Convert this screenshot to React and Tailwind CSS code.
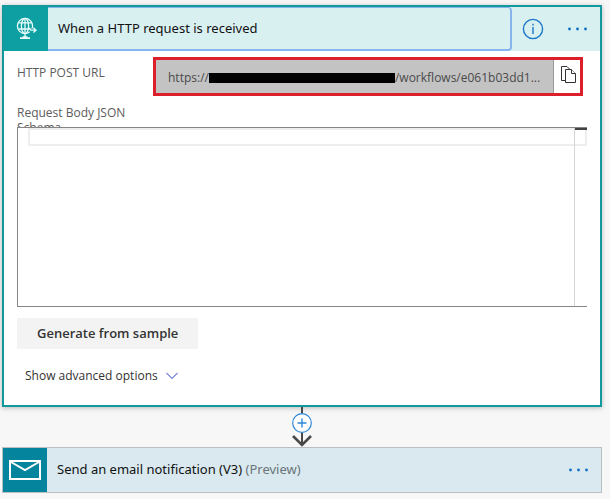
import React from 'react';

const GlobeIcon = () => (
  <svg className="w-6 h-6" viewBox="0 0 24 24" fill="none" stroke="#e8fbfa" strokeWidth="1.3">
    <circle cx="11" cy="9" r="7.6" />
    <ellipse cx="11" cy="9" rx="3.6" ry="7.6" />
    <path d="M4.2 5.8h13.6M4.2 12h13.6M11 1.4v20" />
    <path d="M15.5 13.2h5" stroke="#0d9fa1" strokeWidth="3.4" />
    <path d="M14.5 10.5l2.4 2.7h4.6M19.4 10.8l2.6 2.4-2.6 2.4" />
    <path d="M6 21.2h10M8.5 20.2h5" strokeWidth="1.8" />
  </svg>
);

const MailIcon = () => (
  <svg className="w-8 h-5" viewBox="0 0 32 20" fill="none" stroke="#ffffff" strokeWidth="2">
    <path d="M1 1h30v18H1z" />
    <path d="M2 2l14 8 14-8" />
  </svg>
);

const MoreIcon = () => (
  <svg className="w-5 h-1" viewBox="0 0 20 4" fill="#0f6fc6">
    <circle cx="1.5" cy="2" r="1.4" />
    <circle cx="9.5" cy="2" r="1.4" />
    <circle cx="17.5" cy="2" r="1.4" />
  </svg>
);

const CopyIcon = () => (
  <svg className="w-4 h-5" viewBox="0 0 16 20" fill="#ffffff" stroke="#333333" strokeWidth="1">
    <path d="M4.5 15.5h-4v-14h5.5l3 3" />
    <path d="M4.5 4.5h6l4 4v9h-10z" />
    <path d="M10.5 4.5v4h4" />
  </svg>
);

const TriggerHeader = () => (
  <div className="flex h-11 bg-[#d9f0f1]">
    <div className="w-11 flex items-center justify-center bg-[#0d9fa1]">
      <GlobeIcon />
    </div>
    <button className="flex-1 px-2.5 text-left font-['Noto_Sans',sans-serif] text-[13px] text-[#111111] border-2 border-l-0 border-t border-[#86b4ec] rounded-r-sm">
      When a HTTP request is received
    </button>
    <div className="flex items-center gap-6 pl-2.5 pr-3">
      <button aria-label="Info">
        <svg className="w-[22px] h-[22px]" viewBox="0 0 22 22" fill="none" stroke="#1b76c8" strokeWidth="1.4">
          <circle cx="11" cy="11" r="9.6" />
          <path d="M11 9v7M11 5.8v1.6" />
        </svg>
      </button>
      <button aria-label="More options">
        <MoreIcon />
      </button>
    </div>
  </div>
);

const UrlField = () => (
  <div className="flex">
    <label htmlFor="post-url" className="w-[136px] pt-2 text-[12px] leading-4 text-[#5c5c5c]">
      HTTP POST URL
    </label>
    <div className="flex-1 min-w-0 flex h-[39px] mr-1 border-3 border-[#dc1f2a] bg-[#c3c3c3] text-[12px] text-[#4a4a4a]">
      <div className="flex-1 min-w-0 flex items-center pt-0.5 pl-3 border-r border-[#999999]">
        <span>https://</span>
        <span className="w-[186px] shrink-0 h-2.5 bg-black"></span>
        <input
          id="post-url"
          readOnly
          defaultValue="/workflows/e061b03dd1..."
          className="flex-1 min-w-0 bg-transparent outline-none"
        />
      </div>
      <button aria-label="Copy URL" className="w-[26px] flex items-center justify-center pb-1 pl-1 bg-white">
        <CopyIcon />
      </button>
    </div>
  </div>
);

const SchemaField = () => (
  <div className="mt-2">
    <label htmlFor="schema" className="block w-28 h-[23px] pt-px overflow-hidden text-[12px] leading-[15px] text-[#5c5c5c]">
      Request Body JSON Schema
    </label>
    <div className="relative border border-r-0 border-[#858585]">
      <textarea
        id="schema"
        className="block w-full h-[178px] px-4 py-1 resize-none bg-transparent outline-none font-['Liberation_Mono',monospace] text-[12px]"
      ></textarea>
      {/* Current line and overview ruler */}
      <div className="absolute left-2.5 right-0 top-0 h-[18px] border-2 border-[#eeeeee] pointer-events-none"></div>
      <div className="absolute right-0 inset-y-0 w-[13px] border-l border-[#d5d5d5] pointer-events-none">
        <div className="h-0.5 bg-[#424242]"></div>
      </div>
    </div>
  </div>
);

const Connector = () => (
  <div className="flex justify-center h-10">
    <button aria-label="Insert a new step">
      <svg className="w-6 h-10" viewBox="0 0 24 40" fill="none">
        <path d="M12 0v38" stroke="#484848" strokeWidth="2" />
        <path d="M3 29l9 9 9-9" stroke="#484848" strokeWidth="2.6" />
        <circle cx="12" cy="16" r="9.3" fill="#ffffff" stroke="#2b88d8" strokeWidth="1.2" />
        <path d="M12 11.5v9M7.5 16h9" stroke="#2b88d8" strokeWidth="1.4" />
      </svg>
    </button>
  </div>
);

const App = () => {
  return (
    <div className="min-h-screen pt-[5px] pl-0.5 pr-2 bg-[#f7f7f7] font-['Open_Sans','Noto_Sans',sans-serif]">
      <div className="bg-white border-2 border-[#12999b] shadow-[0_1px_5px_rgba(0,0,0,0.25)]">
        <TriggerHeader />
        <div className="px-[13px] pt-1.5 pb-[21px]">
          <UrlField />
          <SchemaField />
          <button className="block mt-[11px] h-[31px] px-5 bg-[#f3f3f3] text-[13px] font-semibold text-[#333333]">
            Generate from sample
          </button>
          <button className="flex items-center gap-2 mt-[19px] ml-2 text-[12px] leading-4 text-[#333333]">
            Show advanced options
            <svg className="w-3 h-2" viewBox="0 0 12 8" fill="none" stroke="#7b83d3" strokeWidth="1.1">
              <path d="M0.5 1l5.5 5.5L11.5 1" />
            </svg>
          </button>
        </div>
      </div>

      <Connector />

      <div className="flex h-[46px] bg-[#d9e9ef] border border-[#b9bfc2]">
        <div className="w-11 flex items-center justify-center bg-[#04859d]">
          <MailIcon />
        </div>
        <button className="flex-1 px-2.5 text-left font-['Noto_Sans',sans-serif] text-[13px] text-[#111111]">
          Send an email notification (V3) <span className="text-[#6b7478]">(Preview)</span>
        </button>
        <button aria-label="More options" className="px-3">
          <MoreIcon />
        </button>
      </div>
    </div>
  );
};

export default App;
